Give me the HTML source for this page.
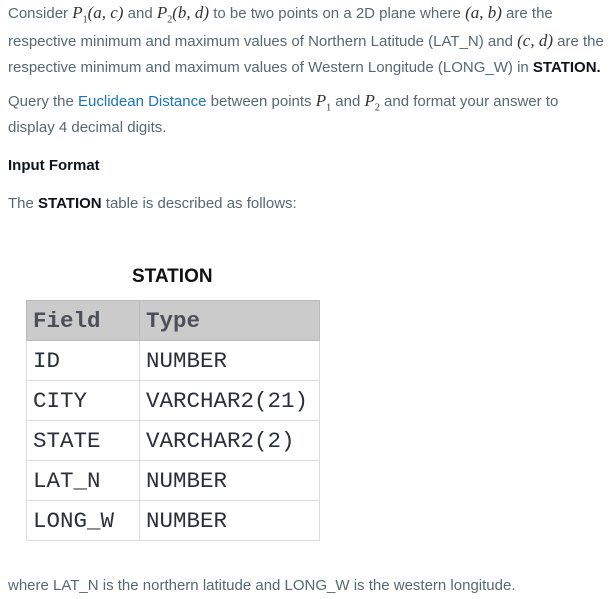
<!DOCTYPE html>
<html><head><meta charset="utf-8"><style>
body{margin:0;background:#fff;width:615px;height:599px;overflow:hidden;font-family:"Liberation Sans",sans-serif;font-size:15px;color:#576871;}
.t{position:absolute;left:8px;white-space:nowrap;}
i.m{font-family:"Liberation Serif",serif;font-style:italic;font-size:17px;color:#333;}
sub{font-size:10px;font-style:normal;}
b{color:#0e141e;}
a{color:#1a73c0;text-decoration:none;}
table{position:absolute;left:26px;top:300px;border-collapse:collapse;font-family:"Liberation Mono",monospace;font-size:22.5px;color:#2b2f3a;}
td{border:1px solid #ddd;height:39px;padding:0 6px;}
tr.h td{background:#cbcbcb;font-weight:bold;color:#4a4f5a;border-color:#bbb;}
</style></head><body>
<div class="t" style="top:3px">Consider <i class="m">P<sub>1</sub>(a, c)</i> and <i class="m">P<sub>2</sub>(b, d)</i> to be two points on a 2D plane where <i class="m">(a, b)</i> are the</div>
<div class="t" style="top:31px">respective minimum and maximum values of Northern Latitude (LAT_N) and <i class="m">(c, d)</i> are the</div>
<div class="t" style="top:59px">respective minimum and maximum values of Western Longitude (LONG_W) in <b>STATION.</b></div>
<div class="t" style="top:91px">Query the <a>Euclidean Distance</a> between points <i class="m">P<sub>1</sub></i> and <i class="m">P<sub>2</sub></i> and format your answer to</div>
<div class="t" style="top:119px">display 4 decimal digits.</div>
<div class="t" style="top:157px;font-weight:bold;color:#0e141e">Input Format</div>
<div class="t" style="top:195px">The <b>STATION</b> table is described as follows:</div>
<div style="position:absolute;left:132px;top:266px;font-weight:bold;font-size:19px;color:#111">STATION</div>
<table>
<tr class="h"><td style="width:100px">Field</td><td style="width:167px">Type</td></tr>
<tr><td>ID</td><td>NUMBER</td></tr>
<tr><td>CITY</td><td>VARCHAR2(21)</td></tr>
<tr><td>STATE</td><td>VARCHAR2(2)</td></tr>
<tr><td>LAT_N</td><td>NUMBER</td></tr>
<tr><td>LONG_W</td><td>NUMBER</td></tr>
</table>
<div class="t" style="top:577px">where LAT_N is the northern latitude and LONG_W is the western longitude.</div>
</body></html>
